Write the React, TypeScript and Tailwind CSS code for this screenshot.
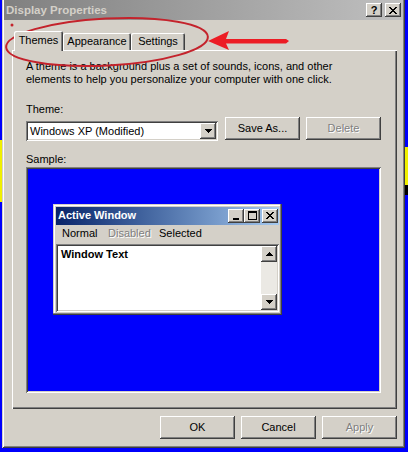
import React from "react";

const RAISED =
  "shadow-[inset_-1px_-1px_#404040,inset_1px_1px_#ffffff,inset_-2px_-2px_#808080]";
const SUNKEN =
  "shadow-[inset_1px_1px_#808080,inset_-1px_-1px_#ffffff,inset_2px_2px_#404040,inset_-2px_-2px_#d4d0c8]";
const DIS = "text-[#808080] [text-shadow:1px_1px_0_#ffffff]";

function PushButton({
  label,
  disabled,
}: {
  label: string;
  disabled?: boolean;
}) {
  return (
    <div
      className={`w-[75px] h-[23px] bg-[#d4d0c8] ${RAISED} flex items-center justify-center text-[11px] leading-[13px] ${
        disabled ? DIS : "text-black"
      }`}
    >
      {label}
    </div>
  );
}

function SmallBtn({ children }: { children: React.ReactNode }) {
  return (
    <div
      className={`w-[16px] h-[14px] bg-[#d4d0c8] ${RAISED} flex items-center justify-center`}
    >
      {children}
    </div>
  );
}

function CloseGlyph() {
  return (
    <svg width="8" height="7" viewBox="0 0 8 7" shapeRendering="crispEdges">
      <path
        d="M0 0h2v1h-2zM1 1h2v1h-2zM2 2h4v1h-4zM3 3h2v1h-2zM2 4h4v1h-4zM1 5h2v1h-2zM0 6h2v1h-2zM6 0h2v1h-2zM5 1h2v1h-2zM5 5h2v1h-2zM6 6h2v1h-2z"
        fill="#000"
      />
    </svg>
  );
}

function DownArrow() {
  return (
    <svg width="7" height="4" viewBox="0 0 7 4" shapeRendering="crispEdges">
      <path d="M0 0h7v1h-7zM1 1h5v1h-5zM2 2h3v1h-3zM3 3h1v1h-1z" fill="#000" />
    </svg>
  );
}

function UpArrow() {
  return (
    <svg width="7" height="4" viewBox="0 0 7 4" shapeRendering="crispEdges">
      <path d="M3 0h1v1h-1zM2 1h3v1h-3zM1 2h5v1h-5zM0 3h7v1h-7z" fill="#000" />
    </svg>
  );
}

function ActiveWindow() {
  return (
    <div
      className={`w-[229px] h-[111px] bg-[#d4d0c8] p-[3px] flex flex-col shadow-[inset_-1px_-1px_#404040,inset_-2px_-2px_#808080,inset_1px_1px_#d4d0c8,inset_2px_2px_#ffffff]`}
    >
      <div className="h-[18px] bg-gradient-to-r from-[#0a246a] to-[#a6caf0] flex items-center justify-between pl-[2px] pr-[1px]">
        <span className="text-white font-bold text-[11px] leading-[13px]">Active Window</span>
        <div className="flex items-center">
          <SmallBtn>
            <svg width="6" height="2" className="mt-[6px] -ml-[1px]">
              <rect width="6" height="2" fill="#000" />
            </svg>
          </SmallBtn>
          <SmallBtn>
            <svg width="9" height="9" viewBox="0 0 9 9" shapeRendering="crispEdges">
              <path d="M0 0h9v2h-9zM0 2h1v7h-1zM8 2h1v7h-1zM0 8h9v1h-9z" fill="#000" />
            </svg>
          </SmallBtn>
          <div className="w-[2px]" />
          <SmallBtn>
            <CloseGlyph />
          </SmallBtn>
        </div>
      </div>
      <div className="h-[18px] flex items-center text-[11px] leading-[13px] pl-[6px]">
        <span className="w-[46px] text-black">Normal</span>
        <span className={`w-[51px] ${DIS}`}>Disabled</span>
        <span className="text-black">Selected</span>
      </div>
      <div className={`mt-[1px] h-[69px] bg-white ${SUNKEN} p-[2px] flex`}>
        <div className="flex-1 pl-[3px] pt-[2px] text-[11px] leading-[13px] font-bold text-black">
          Window Text
        </div>
        <div className="w-[16px] flex flex-col bg-[#ebe9e4]">
          <div className={`h-[16px] bg-[#d4d0c8] ${RAISED} flex items-center justify-center`}>
            <UpArrow />
          </div>
          <div className="flex-1" />
          <div className={`h-[16px] bg-[#d4d0c8] ${RAISED} flex items-center justify-center`}>
            <DownArrow />
          </div>
        </div>
      </div>
    </div>
  );
}

function Tab({
  label,
  selected,
  w,
}: {
  label: string;
  selected?: boolean;
  w: string;
}) {
  return (
    <div
      className={`${w} ${
        selected ? "h-[20px] -mb-[1px] relative z-10 pt-[3px]" : "h-[17px] pt-[2px]"
      } bg-[#d4d0c8] rounded-t-[2px] shadow-[inset_1px_1px_#ffffff,inset_-1px_0_#404040,inset_-2px_0_#808080] text-[11px] leading-[13px] text-black flex justify-center`}
    >
      {label}
    </div>
  );
}

export default function App() {
  return (
    <div className="relative w-[408px] h-[452px] bg-[#0000fc] overflow-hidden font-['Liberation_Sans',Arial,sans-serif]">
      {/* desktop bits behind the dialog */}
      <div className="absolute left-0 top-[140px] w-[2px] h-[62px] bg-[#f0f000]" />
      <div className="absolute right-0 top-[147px] w-[3px] h-[38px] bg-[#f0f000]" />
      <div className="absolute right-0 top-[185px] w-[3px] h-[10px] bg-black" />

      {/* dialog */}
      <div className="relative ml-[2px] w-[403px] h-[448px] bg-[#d4d0c8] flex flex-col shadow-[inset_1px_0_#d4d0c8,inset_-1px_-1px_#404040,inset_2px_0_#ffffff,inset_-2px_-2px_#808080]">
        {/* title bar */}
        <div className="mx-[2px] h-[20px] bg-gradient-to-r from-[#808080] to-[#c0c0c0] flex items-center justify-between pl-[2px] pr-[2px]">
          <span className="text-[#d4d0c8] font-bold text-[11.5px] leading-[13px]">
            Display Properties
          </span>
          <div className="flex items-center gap-[3px]">
            <SmallBtn>
              <span className="text-[11px] leading-[11px] font-bold text-black">?</span>
            </SmallBtn>
            <SmallBtn>
              <CloseGlyph />
            </SmallBtn>
          </div>
        </div>

        {/* tabs */}
        <div className="mt-[11px] ml-[12px] h-[19px] flex items-end">
          <Tab label="Themes" selected w="w-[49px]" />
          <Tab label="Appearance" w="w-[68px]" />
          <Tab label="Settings" w="w-[54px]" />
        </div>

        {/* panel */}
        <div className="ml-[10px] w-[385px] h-[359px] shadow-[inset_1px_1px_#ffffff,inset_-1px_-1px_#404040,inset_-2px_-2px_#808080] pl-[14px] pr-[16px] pt-[10px] flex flex-col">
          <p className="text-[11px] leading-[13px] text-black">
            A theme is a background plus a set of sounds, icons, and other
            <br />
            elements to help you personalize your computer with one click.
          </p>
          <div className="mt-[17px] text-[11px] leading-[13px] text-black">Theme:</div>
          <div className="flex items-start">
            <div className={`mt-[5px] w-[192px] h-[20px] bg-white ${SUNKEN} flex items-center pl-[4px] pr-[2px]`}>
              <span className="flex-1 text-[11px] leading-[13px] text-black">Windows XP (Modified)</span>
              <div className={`w-[16px] h-[16px] bg-[#d4d0c8] ${RAISED} flex items-center justify-center`}>
                <DownArrow />
              </div>
            </div>
            <div className="mt-[1px] ml-[7px]">
              <PushButton label="Save As..." />
            </div>
            <div className="mt-[1px] ml-[6px]">
              <PushButton label="Delete" disabled />
            </div>
          </div>
          <div className="mt-[12px] text-[11px] leading-[13px] text-black">Sample:</div>
          <div className="mt-[1px] w-[355px] h-[226px] bg-[#0000fc] shadow-[inset_1px_1px_#808080,inset_-1px_-1px_#ffffff,inset_2px_2px_#404040,inset_-2px_-2px_#d4d0c8] pl-[27px] pt-[37px]">
            <ActiveWindow />
          </div>
        </div>

        {/* bottom buttons */}
        <div className="mt-[7px] flex justify-end gap-[6px] pr-[8px]">
          <PushButton label="OK" />
          <PushButton label="Cancel" />
          <PushButton label="Apply" disabled />
        </div>
      </div>

      {/* red annotation */}
      <svg
        className="absolute left-0 top-0 pointer-events-none"
        width="408"
        height="452"
        viewBox="0 0 408 452"
      >
        <ellipse
          cx="107"
          cy="42"
          rx="101"
          ry="23.5"
          transform="rotate(-3 107 42)"
          fill="none"
          stroke="#c4232c"
          strokeWidth="2"
        />
        <circle cx="12" cy="25" r="1.5" fill="#c4232c" />
        <polygon
          points="208,41 229,31 226,39 286,39 289,41 286,43.5 226,43.5 229,50"
          fill="#ec1c24"
        />
      </svg>
    </div>
  );
}
